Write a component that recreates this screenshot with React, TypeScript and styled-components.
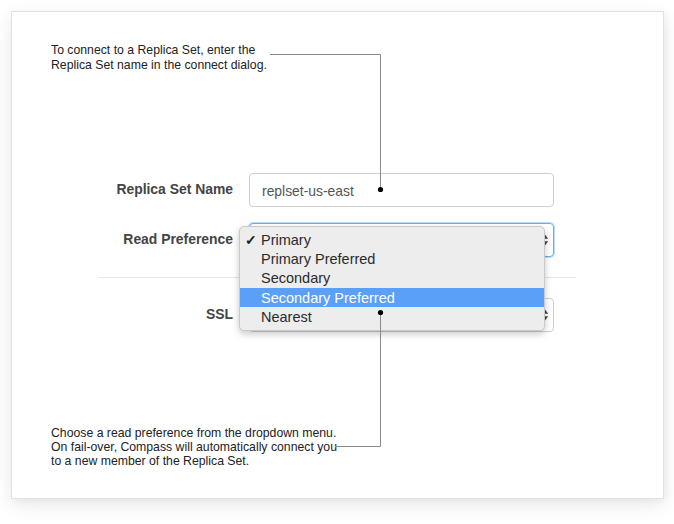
import React from "react";
import styled, { createGlobalStyle } from "styled-components";

const Global = createGlobalStyle`
  html, body { margin: 0; padding: 0; background: #ffffff; }
  body { font-family: "Liberation Sans", Arial, sans-serif; }
  * { box-sizing: border-box; }
`;

const Page = styled.div`
  width: 674px;
  height: 524px;
  padding: 11px 0 0 11px;
`;

const Card = styled.div`
  position: relative;
  width: 653px;
  height: 488px;
  background: #fff;
  border: 1px solid #e1e1e1;
  box-shadow: 0 6px 18px rgba(0, 0, 0, 0.09), 2px 2px 6px rgba(0, 0, 0, 0.04);
  display: flex;
  flex-direction: column;
  padding-top: 31px;
`;

const Note = styled.p<{ $lh: number; $mt: number }>`
  margin: ${(p) => p.$mt}px 0 0 39px;
  font-size: 12.25px;
  line-height: ${(p) => p.$lh}px;
  color: #222;
`;

const Form = styled.div`
  margin-top: 100px;
  display: flex;
  flex-direction: column;
`;

const Row = styled.div<{ $mt?: number }>`
  display: grid;
  grid-template-columns: 221px 305px;
  column-gap: 16px;
  align-items: center;
  margin-top: ${(p) => p.$mt ?? 0}px;
`;

const Label = styled.label`
  text-align: right;
  font-size: 13.9px;
  font-weight: bold;
  color: #444;
  padding-bottom: 3px;
`;

const Input = styled.div`
  height: 34px;
  border: 1px solid #cfcfcf;
  border-radius: 4px;
  padding: 1px 12px 0;
  display: flex;
  align-items: center;
  font-size: 13.9px;
  color: #555;
`;

const SelectWrap = styled.div`
  position: relative;
`;

const Select = styled.div<{ $focus?: boolean }>`
  height: 34px;
  border: 1px solid ${(p) => (p.$focus ? "#6aaef0" : "#cfcfcf")};
  box-shadow: ${(p) => (p.$focus ? "0 0 0 1px rgba(106,174,240,0.45)" : "none")};
  border-radius: 4px;
  padding: 0 4px 0 12px;
  display: flex;
  align-items: center;
  justify-content: flex-end;
`;

const Arrows = styled.svg`
  width: 8px;
  height: 12px;
`;

const Divider = styled.div`
  margin: 20px 0 20px 87px;
  width: 477px;
  height: 1px;
  background: #e6e6e6;
`;

const Menu = styled.ul`
  position: absolute;
  left: -10px;
  top: 3px;
  width: 306px;
  height: 105px;
  margin: 0;
  padding: 3.5px 0 0;
  list-style: none;
  background: #ededed;
  border: 1px solid #c9c9c9;
  border-radius: 5px;
  box-shadow: 0 3px 7px rgba(0, 0, 0, 0.22);
  z-index: 2;
`;

const Item = styled.li<{ $active?: boolean }>`
  display: flex;
  align-items: center;
  height: 19.2px;
  font-size: 14.5px;
  color: ${(p) => (p.$active ? "#fff" : "#2b2b2b")};
  background: ${(p) => (p.$active ? "#5a9ff8" : "transparent")};
`;

const Check = styled.span`
  width: 21px;
  padding-left: 5px;
  font-size: 14px;
  font-weight: bold;
  color: #222;
`;

const Overlay = styled.svg`
  position: absolute;
  left: -1px;
  top: -1px;
  width: 653px;
  height: 488px;
  pointer-events: none;
  z-index: 3;
`;

const ArrowIcon = () => (
  <Arrows viewBox="0 0 8 12">
    <path d="M4 0.5 L7.2 4.8 H0.8 Z" fill="#444" />
    <path d="M4 11.5 L7.2 7.2 H0.8 Z" fill="#444" />
  </Arrows>
);

const options = ["Primary", "Primary Preferred", "Secondary", "Secondary Preferred", "Nearest"];

export default function App() {
  return (
    <>
      <Global />
      <Page>
        <Card>
          <Note $lh={15} $mt={0}>
            To connect to a Replica Set, enter the
            <br />
            Replica Set name in the connect dialog.
          </Note>
          <Form>
            <Row>
              <Label>Replica Set Name</Label>
              <Input>replset-us-east</Input>
            </Row>
            <Row $mt={16}>
              <Label>Read Preference</Label>
              <SelectWrap>
                <Select $focus>
                  <ArrowIcon />
                </Select>
                <Menu>
                  {options.map((o, i) => (
                    <Item key={o} $active={i === 3}>
                      <Check>{i === 0 ? "✓" : ""}</Check>
                      {o}
                    </Item>
                  ))}
                </Menu>
              </SelectWrap>
            </Row>
            <Divider />
            <Row>
              <Label>SSL</Label>
              <Select>
                <ArrowIcon />
              </Select>
            </Row>
          </Form>
          <Note $lh={14} $mt={94}>
            Choose a read preference from the dropdown menu.
            <br />
            On fail-over, Compass will automatically connect you
            <br />
            to a new member of the Replica Set.
          </Note>
          <Overlay viewBox="0 0 653 488">
            <g stroke="#8a8a8a" strokeWidth="1" fill="none">
              <path d="M259 43.5 H369.5 V178" />
              <path d="M369.5 301 V435.5 H324" />
            </g>
            <circle cx="369.5" cy="178.5" r="2.6" fill="#000" />
            <circle cx="369.5" cy="301.5" r="2.6" fill="#000" />
          </Overlay>
        </Card>
      </Page>
    </>
  );
}
